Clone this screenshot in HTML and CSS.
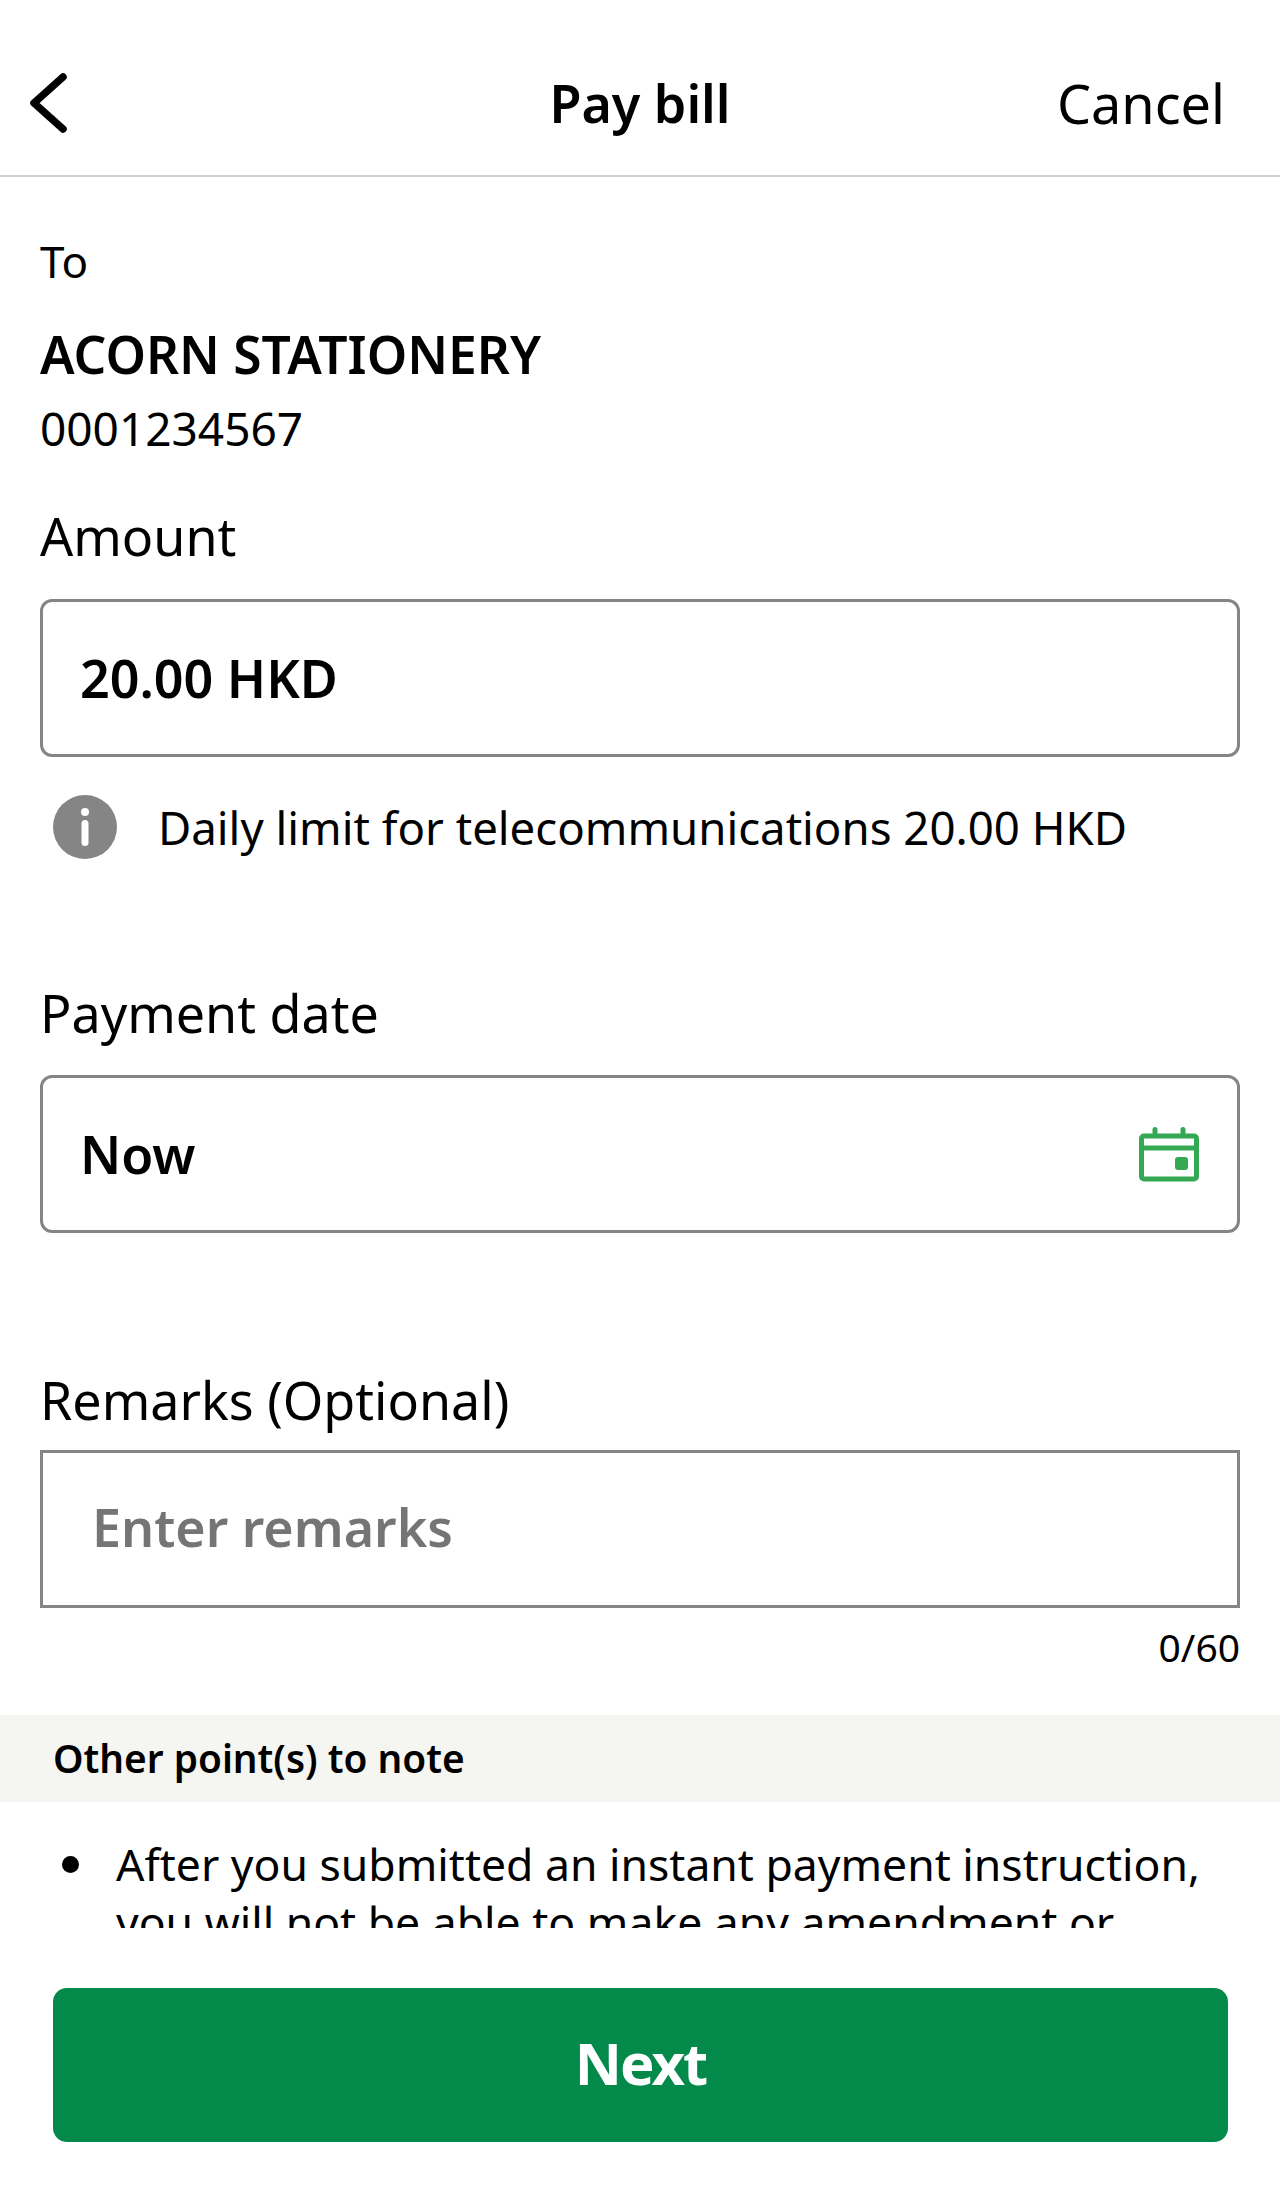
FILE: index.html
```html
<!DOCTYPE html>
<html>
	<head>
		<title>Pay bill</title>
		<link rel="stylesheet" href="styles.css">
	</head>

	<body>
		<div class="screen">
			<div class="topbar">
				<svg class="back" width="40" height="62" viewBox="0 0 40 62">
					<path d="M35 5 L6 31 L35 57" fill="none" stroke="#000" stroke-width="7.5" stroke-linecap="round" stroke-linejoin="round"/>
				</svg>
				<div class="title">Pay bill</div>
				<div class="cancel">Cancel</div>
			</div>

			<div class="form">
				<div class="to-label">To</div>
				<div class="payee">ACORN STATIONERY</div>
				<div class="account">0001234567</div>

				<div class="label amount-label">Amount</div>
				<div class="field">
					<span class="value">20.00 HKD</span>
				</div>
				<div class="hint">
					<svg width="64" height="64" viewBox="0 0 64 64">
						<circle cx="32" cy="32" r="32" fill="#858585"/>
						<circle cx="32" cy="17" r="4" fill="#fff"/>
						<rect x="28.5" y="25" width="7" height="26" rx="3.5" fill="#fff"/>
					</svg>
					<span>Daily limit for telecommunications 20.00 HKD</span>
				</div>

				<div class="label date-label">Payment date</div>
				<div class="field">
					<span class="value">Now</span>
					<svg class="calendar" width="60" height="55" viewBox="0 0 60 55">
						<path d="M5 9 H55 a2.5 2.5 0 0 1 2.5 2.5 V49.5 a2.5 2.5 0 0 1 -2.5 2.5 H5 a2.5 2.5 0 0 1 -2.5 -2.5 V11.5 a2.5 2.5 0 0 1 2.5 -2.5 Z M2.5 21 H57.5 M16 2.5 V9 M44 2.5 V9" fill="none" stroke="#34a853" stroke-width="5" stroke-linecap="round"/>
						<rect x="36" y="30" width="13" height="13" rx="3" fill="#34a853"/>
					</svg>
				</div>

				<div class="label remarks-label">Remarks (Optional)</div>
				<div class="field field-square">
					<span class="placeholder">Enter remarks</span>
				</div>
				<div class="counter">0/60</div>
			</div>

			<div class="notes">
				<div class="notes-head">Other point(s) to note</div>
				<ul class="notes-list">
					<li>After you submitted an instant payment instruction, you will not be able to make any amendment or cancellation.</li>
				</ul>
			</div>

			<div class="footer">
				<div class="next">Next</div>
			</div>
		</div>
	</body>
</html>
```

FILE: styles.css
```css
html, body {
	margin: 0;
	padding: 0;
	background: white;
}

.screen {
	width: 1280px;
	height: 2200px;
	display: flex;
	flex-direction: column;
	color: black;
	font-family: "Noto Sans", "Open Sans", sans-serif;
	overflow: hidden;
}

.topbar {
	height: 177px;
	flex: none;
	box-sizing: border-box;
	border-bottom: 2px solid #cfcfcf;
	padding: 30px 28px 0;
	display: grid;
	grid-template-columns: 1fr auto 1fr;
	align-items: center;
}

.title {
	font-size: 52px;
	font-weight: 600;
}

.cancel {
	font-size: 54px;
	text-align: right;
	padding-right: 27px;
}

.form {
	flex: none;
	height: 1538px;
	box-sizing: border-box;
	padding: 59px 40px 0;
}

.to-label {
	font-size: 44px;
	line-height: 50px;
}

.payee {
	font-size: 51.5px;
	font-weight: 600;
	line-height: 60px;
	margin-top: 38px;
}

.account {
	font-size: 46px;
	line-height: 60px;
	margin-top: 14px;
}

.label {
	font-size: 52px;
	line-height: 60px;
}

.amount-label {
	margin-top: 48px;
	margin-bottom: 33px;
}

.date-label {
	margin-top: 124px;
	margin-bottom: 32px;
}

.remarks-label {
	margin-top: 137px;
	margin-bottom: 20px;
}

.field {
	height: 158px;
	box-sizing: border-box;
	border: 3px solid #858585;
	border-radius: 12px;
	padding: 0 39px 2px 37px;
	display: flex;
	align-items: center;
	justify-content: space-between;
}

.calendar {
	margin: 3px -1px 0 0;
}

.field-square {
	border-radius: 0;
	padding: 0 49px 6px;
}

.value {
	font-size: 52px;
	font-weight: 600;
}

.placeholder {
	font-size: 52px;
	font-weight: 600;
	color: #757575;
}

.hint {
	display: flex;
	align-items: center;
	gap: 41px;
	padding-left: 13px;
	margin-top: 38px;
	font-size: 45.6px;
	line-height: 64px;
}

.counter {
	text-align: right;
	font-size: 39px;
	line-height: 50px;
	margin-top: 14px;
}

.notes {
	flex: 1;
	min-height: 0;
	overflow: hidden;
}

.notes-head {
	height: 87px;
	line-height: 87px;
	background: #f5f6f1;
	padding-left: 53px;
	font-size: 38.8px;
	font-weight: 600;
}

.notes-list {
	list-style: none;
	margin: 33px 0 0;
	padding: 0 40px 0 62px;
	font-size: 44.5px;
	line-height: 58px;
}

.notes-list li {
	display: flex;
	gap: 37px;
}

.notes-list li::before {
	content: "";
	flex: none;
	width: 17px;
	height: 17px;
	margin-top: 21px;
	border-radius: 50%;
	background: black;
}

.footer {
	flex: none;
	height: 272px;
	box-sizing: border-box;
	padding: 60px 52px 58px 53px;
}

.next {
	height: 154px;
	line-height: 150px;
	background: #038a4a;
	border-radius: 14px;
	color: white;
	text-align: center;
	font-size: 58px;
	font-weight: 700;
	letter-spacing: -2px;
}
```
